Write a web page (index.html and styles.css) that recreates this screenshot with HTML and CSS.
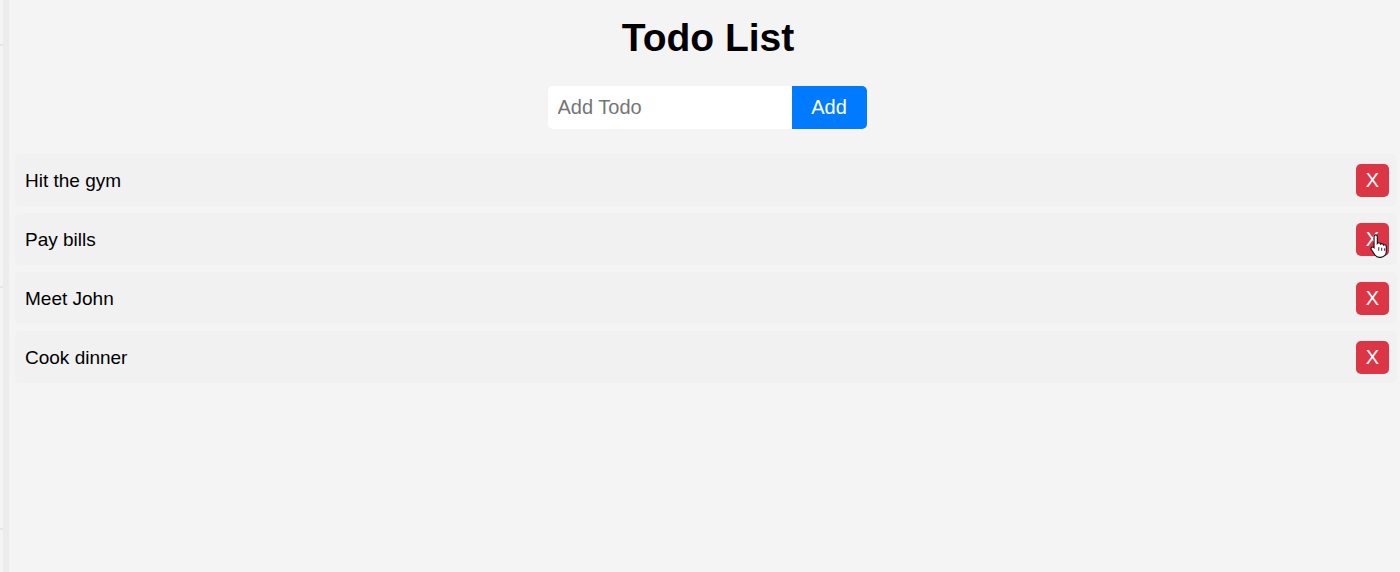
FILE: index.html
```html
<!DOCTYPE html>
<html>
<head>
<meta charset="utf-8">
<link rel="stylesheet" href="styles.css">
</head>
<body>
<div class="frame">
  <div class="side">
    <div class="side-line l1"></div>
    <div class="side-line l2"></div>
    <div class="side-line l3"></div>
  </div>
  <main class="app">
    <h1 class="title">Todo List</h1>
    <form class="add-form">
      <input class="add-input" type="text" placeholder="Add Todo">
      <button class="add-btn" type="button">Add</button>
    </form>
    <ul class="todo-list">
      <li class="todo"><span class="todo-text">Hit the gym</span><button class="del" type="button">X</button></li>
      <li class="todo"><span class="todo-text">Pay bills</span><button class="del hovered" type="button">X<svg class="cursor" width="18" height="25" viewBox="0 0 16 22"><path d="M5 1.5c.8 0 1.5.6 1.5 1.4v6.3c.3-.4.8-.6 1.3-.6.8 0 1.4.5 1.5 1.2.3-.3.7-.5 1.2-.5.8 0 1.4.6 1.5 1.3.3-.2.6-.3 1-.3.9 0 1.5.7 1.5 1.5v4.6c0 2.900-2.200 5.100-5 5.100H8.300c-1.600 0-3-.8-3.900-2.100L1.200 14.600c-.5-.7-.3-1.600.4-2 .6-.4 1.400-.3 1.900.2l.1.1V2.900c0-.8.6-1.400 1.400-1.400z" fill="#fff" stroke="#111" stroke-width="1"/><path d="M7.8 12.5v3.2M10.4 13v2.7M13 13.5v2.2" stroke="#111" stroke-width="0.8" fill="none"/></svg></button></li>
      <li class="todo"><span class="todo-text">Meet John</span><button class="del" type="button">X</button></li>
      <li class="todo"><span class="todo-text">Cook dinner</span><button class="del" type="button">X</button></li>
    </ul>
  </main>
</div>
</body>
</html>
```
FILE: styles.css
```css
* { box-sizing: border-box; }
html, body { margin: 0; padding: 0; }
body {
  width: 1400px;
  height: 572px;
  overflow: hidden;
  background: #f4f4f4;
  font-family: "Liberation Sans", Arial, sans-serif;
  color: #000;
}
.frame {
  display: flex;
  height: 572px;
}
.side {
  position: relative;
  width: 9px;
  flex: none;
  background: #ececec;
  border-left: 3px solid #f4f4f4;
}
.side-line {
  position: absolute;
  left: -3px;
  width: 3px;
  height: 2px;
  background: #e6e6e6;
}
.l1 { top: 44px; }
.l2 { top: 286px; }
.l3 { top: 528px; }
.app {
  flex: 1;
  display: flex;
  flex-direction: column;
  align-items: center;
  padding: 0 0 0 3px;
  background: #f4f4f4;
}
.title {
  margin: 15px 0 0 4px;
  font-size: 39px;
  line-height: 46px;
  font-weight: bold;
}
.add-form {
  display: flex;
  margin: 25px 0 0 2px;
}
.add-input {
  width: 244px;
  height: 43px;
  border: none;
  outline: none;
  border-radius: 5px 0 0 5px;
  background: #fff;
  padding: 0 10px;
  font-family: "Liberation Sans", Arial, sans-serif;
  font-size: 20px;
  color: #000;
}
.add-input::placeholder { color: #757575; }
.add-btn {
  width: 75px;
  height: 43px;
  border: none;
  border-radius: 0 5px 5px 0;
  background: #007bff;
  color: #fff;
  font-family: "Liberation Sans", Arial, sans-serif;
  font-size: 20px;
  padding: 0;
}
.todo-list {
  list-style: none;
  margin: 25px 0 0 0;
  padding: 0;
  width: 1382px;
  display: flex;
  flex-direction: column;
  gap: 7px;
}
.todo {
  display: flex;
  align-items: center;
  justify-content: space-between;
  height: 52px;
  padding: 0 8px 0 10px;
  background: #f1f1f1;
  border-radius: 5px;
}
.todo-text {
  font-size: 19px;
  padding-top: 2px;
}
.del {
  position: relative;
  width: 33px;
  height: 33px;
  border: none;
  border-radius: 5px;
  background: #dc3545;
  color: #fff;
  font-family: "Liberation Sans", Arial, sans-serif;
  font-size: 20px;
  padding: 0;
}
.cursor {
  position: absolute;
  left: 14px;
  top: 10px;
}
```
